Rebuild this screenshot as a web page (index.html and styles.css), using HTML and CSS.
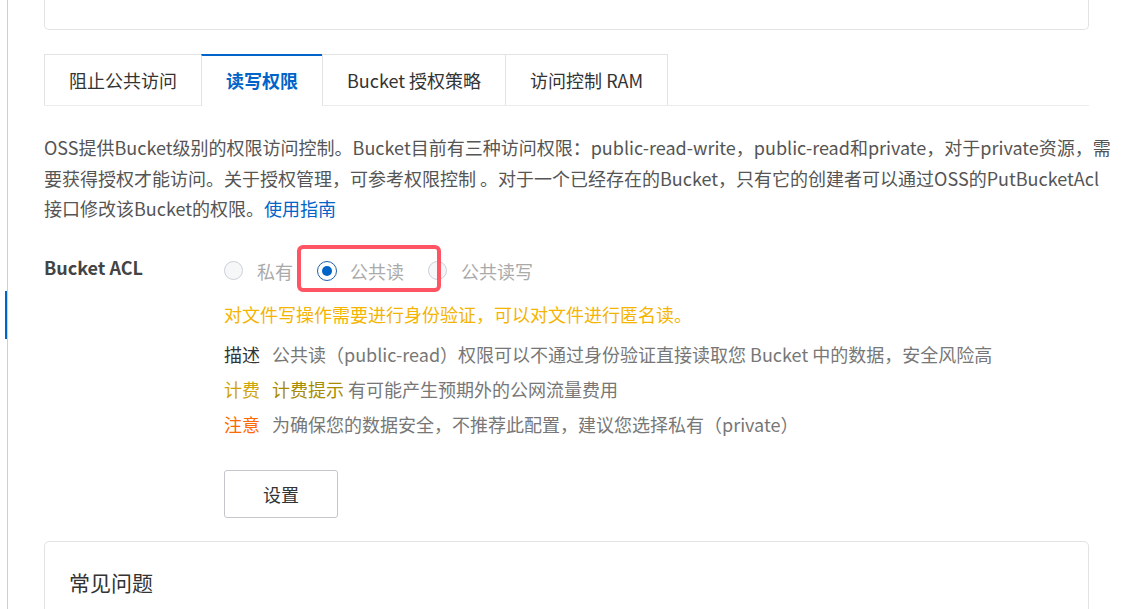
FILE: index.html
```html
<!DOCTYPE html>
<html>
<head>
  <title>读写权限 - Bucket</title>
  <link rel="stylesheet" href="styles.css">
</head>
<body>
  <aside class="rail">
    <div class="rail-mark"></div>
  </aside>

  <main class="main">
    <div class="top-card"></div>

    <nav class="tabs">
      <div class="tab">阻止公共访问</div>
      <div class="tab active">读写权限</div>
      <div class="tab">Bucket 授权策略</div>
      <div class="tab">访问控制 RAM</div>
    </nav>

    <p class="intro">
      OSS提供Bucket级别的权限访问控制。Bucket目前有三种访问权限：public-read-write，public-read和private，对于private资源，需<br>
      要获得授权才能访问。关于授权管理，可参考权限控制 。对于一个已经存在的Bucket，只有它的创建者可以通过OSS的PutBucketAcl<br>
      接口修改该Bucket的权限。<a href="#" class="link">使用指南</a>
    </p>

    <div class="acl-form">
      <div class="acl-label">Bucket ACL</div>
      <div class="acl-body">
        <div class="radios">
          <label class="radio"><span class="dot"></span>私有</label>
          <label class="radio checked"><span class="dot"></span>公共读</label>
          <label class="radio"><span class="dot"></span>公共读写</label>
          <div class="highlight"></div>
        </div>

        <div class="tip">对文件写操作需要进行身份验证，可以对文件进行匿名读。</div>

        <div class="info-row"><span class="key">描述</span>公共读（public-read）权限可以不通过身份验证直接读取您 Bucket 中的数据，安全风险高</div>
        <div class="info-row"><span class="key fee">计费</span><span class="fee-tip">计费提示</span> 有可能产生预期外的公网流量费用</div>
        <div class="info-row"><span class="key warn">注意</span>为确保您的数据安全，不推荐此配置，建议您选择私有（private）</div>

        <button class="btn">设置</button>
      </div>
    </div>

    <div class="faq-card">
      <h3>常见问题</h3>
    </div>
  </main>
</body>
</html>
```

FILE: styles.css
```css
body {
  margin: 0;
  display: flex;
  font-family: "Noto Sans CJK SC", "Noto Sans", sans-serif;
  color: #333;
  background: #fff;
  overflow: hidden;
  height: 609px;
}

.rail {
  width: 7px;
  flex-shrink: 0;
  border-right: 1px solid #d0d0d0;
}
.rail-mark {
  margin-top: 291px;
  margin-left: 5px;
  width: 2px;
  height: 48px;
  background: #0064c8;
}

.main {
  flex: 1;
  min-width: 0;
  padding: 0 36px;
}

.top-card {
  height: 29px;
  border: 1px solid #e3e3e3;
  border-top: none;
  border-radius: 0 0 5px 5px;
}

/* tabs */
.tabs {
  display: flex;
  margin-top: 24px;
  border-bottom: 1px solid #ececec;
}
.tab {
  height: 50px;
  line-height: 50px;
  padding: 0 24px;
  font-size: 18px;
  color: #333;
  border: 1px solid #e3e3e3;
  border-bottom: none;
  margin-left: -1px;
}
.tab:first-child {
  margin-left: 0;
}
.tab.active {
  border-top: 2px solid #0064c8;
  color: #0064c8;
  font-weight: bold;
  line-height: 49px;
  margin-bottom: -1px;
  height: 50px;
  background: #fff;
}

.intro {
  margin: 26px 0 0;
  font-size: 18px;
  line-height: 30.6px;
  color: #555;
  white-space: nowrap;
}
.link {
  color: #0064c8;
  text-decoration: none;
}

/* acl form */
.acl-form {
  display: flex;
  margin-top: 28px;
}
.acl-label {
  width: 180px;
  flex-shrink: 0;
  font-size: 18px;
  font-weight: 600;
  line-height: 30px;
  color: #444;
}
.acl-body {
  flex: 1;
}

.radios {
  position: relative;
  display: flex;
  gap: 24px;
  padding-top: 4px;
  font-size: 18px;
  line-height: 30px;
  color: #aaa;
}
.radio {
  display: flex;
  align-items: center;
}
.dot {
  width: 17px;
  height: 17px;
  margin-right: 14px;
  border: 1px solid #ccd0d7;
  border-radius: 50%;
  background: #f6f7f9;
  box-sizing: content-box;
}
.radio.checked .dot {
  width: 10px;
  height: 10px;
  border: 1px solid #1f5fa8;
  background: #0064c8;
  padding: 4px;
  background-clip: content-box;
  margin-right: 13px;
}
.highlight {
  position: absolute;
  left: 73px;
  top: -7px;
  width: 136px;
  height: 39px;
  border: 4px solid #fe5464;
  border-radius: 6px;
}

.tip {
  margin-top: 13px;
  font-size: 18px;
  line-height: 30px;
  color: #f4b400;
}

.info-row {
  font-size: 18px;
  line-height: 35px;
  color: #777;
}
.tip + .info-row {
  margin-top: 8px;
}
.key {
  color: #333;
  margin-right: 12px;
}
.key.fee {
  color: #d0a408;
}
.key.warn {
  color: #ff6a00;
}
.fee-tip {
  color: #a88c00;
}

.btn {
  margin-top: 28px;
  width: 114px;
  height: 48px;
  border: 1px solid #c4c6cc;
  border-radius: 3px;
  background: #fff;
  font-family: inherit;
  font-size: 18px;
  color: #333;
  cursor: pointer;
}

.faq-card {
  margin-top: 23px;
  padding: 25px 24px;
  border: 1px solid #e3e3e3;
  border-radius: 5px;
  height: 200px;
}
.faq-card h3 {
  margin: 0;
  font-size: 21px;
  font-weight: normal;
  line-height: 30px;
  color: #333;
}
```
